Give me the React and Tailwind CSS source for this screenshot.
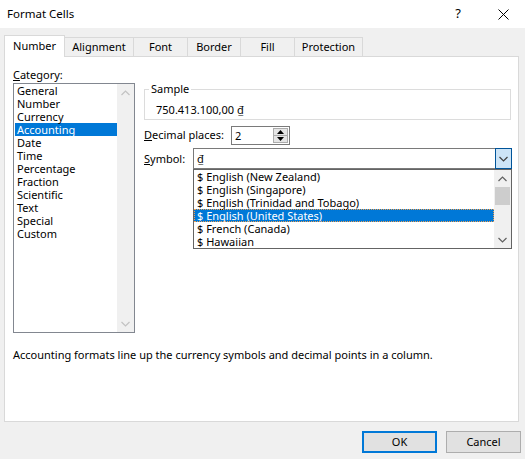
import { useState } from "react"

const categories = [
  "General", "Number", "Currency", "Accounting", "Date", "Time",
  "Percentage", "Fraction", "Scientific", "Text", "Special", "Custom",
]

const symbols = [
  "$ English (New Zealand)",
  "$ English (Singapore)",
  "$ English (Trinidad and Tobago)",
  "$ English (United States)",
  "$ French (Canada)",
  "$ Hawaiian",
]

const tabs = [
  { name: "Number", w: "w-[61px]" },
  { name: "Alignment", w: "w-[70px]" },
  { name: "Font", w: "w-[55px]" },
  { name: "Border", w: "w-[54px]" },
  { name: "Fill", w: "w-[55px]" },
  { name: "Protection", w: "w-[69px]" },
]

function Chevron({ up, color }) {
  return (
    <svg width="9" height="6" viewBox="0 0 9 6">
      <path
        d={up ? "M0.5 5L4.5 1L8.5 5" : "M0.5 1L4.5 5L8.5 1"}
        fill="none"
        stroke={color}
        strokeWidth="1.2"
      />
    </svg>
  )
}

function Triangle({ up }) {
  return (
    <svg width="7" height="4" viewBox="0 0 7 4">
      <path d={up ? "M0 4L3.5 0L7 4Z" : "M0 0L3.5 4L7 0Z"} fill="#000" />
    </svg>
  )
}

export default function App() {
  const [category, setCategory] = useState(3)
  const [symbol, setSymbol] = useState(3)

  return (
    <div className="w-[525px] h-[459px] overflow-hidden bg-[#f0f0f0] text-[11px] text-black font-['Segoe_UI','Noto_Sans',sans-serif]">
      {/* Title bar */}
      <div className="h-[28px] bg-white flex items-center">
        <span className="pl-[7px] text-[11.5px]">Format Cells</span>
        <div className="ml-auto flex h-full">
          <div className="w-[46px] flex items-center justify-center text-[13px]">?</div>
          <div className="w-[44px] flex items-center justify-center">
            <svg width="11" height="11" viewBox="0 0 11 11">
              <path d="M0.5 0.5L10.5 10.5M10.5 0.5L0.5 10.5" stroke="#000" strokeWidth="1" />
            </svg>
          </div>
        </div>
      </div>

      {/* Tabs */}
      <div className="h-[21px] mt-[7px] pl-[4px] flex items-end relative z-10">
        {tabs.map((t, i) =>
          i === 0 ? (
            <div
              key={t.name}
              className={`${t.w} h-[22px] -mb-px bg-white border-t border-l border-r border-[#d9d9d9] flex items-center justify-center`}
            >
              {t.name}
            </div>
          ) : (
            <div
              key={t.name}
              className={`${t.w} h-[19px] -ml-px bg-[#f0f0f0] border-t border-l border-r border-[#d9d9d9] flex items-center justify-center pt-[1px]`}
            >
              {t.name}
            </div>
          )
        )}
      </div>

      {/* Panel */}
      <div className="ml-[4px] w-[515px] h-[366px] bg-white border border-[#d9d9d9] pt-[9px] pl-[8px]">
        <div className="flex">
          {/* Category */}
          <div className="w-[122px]">
            <div className="h-[17px] leading-[17px]">
              <u>C</u>ategory:
            </div>
            <div className="h-[250px] border border-[#828790] bg-white flex">
              <div className="flex-1 pl-px">
                {categories.map((c, i) => (
                  <div
                    key={c}
                    onClick={() => setCategory(i)}
                    className={`h-[13px] leading-[13px] pl-[2px] ${
                      i === category ? "bg-[#0078d7] text-white" : ""
                    }`}
                  >
                    {c}
                  </div>
                ))}
              </div>
              <div className="w-[17px] bg-[#f0f0f0] flex flex-col justify-between">
                <div className="h-[17px] flex items-center justify-center">
                  <Chevron up color="#c2c2c2" />
                </div>
                <div className="h-[17px] flex items-center justify-center">
                  <Chevron color="#c2c2c2" />
                </div>
              </div>
            </div>
          </div>

          {/* Right side */}
          <div className="ml-[9px]">
            <fieldset className="w-[367px] mt-[15px] border border-[#dcdcdc]">
              <legend className="ml-[4px] px-[2px] leading-[16px]">Sample</legend>
              <div className="pt-[5px] pb-[1px] pl-[11px] leading-[16px]">750.413.100,00 ₫</div>
            </fieldset>

            <div className="mt-[6px] flex items-center">
              <div className="w-[87px] whitespace-nowrap">
                <u>D</u>ecimal places:
              </div>
              <div className="w-[59px] h-[19px] border border-[#7a7a7a] bg-white flex">
                <div className="flex-1 pl-[3px] leading-[17px]">2</div>
                <div className="w-[15px] my-px mr-px flex flex-col">
                  <div className="flex-1 border border-[#acacac] bg-[#e5e5e5] flex items-center justify-center">
                    <Triangle up />
                  </div>
                  <div className="flex-1 -mt-px border border-[#acacac] bg-[#e5e5e5] flex items-center justify-center">
                    <Triangle />
                  </div>
                </div>
              </div>
            </div>

            <div className="mt-[3px] flex">
              <div className="w-[49px] h-[21px] leading-[21px]">
                <u>S</u>ymbol:
              </div>
              <div className="w-[319px]">
                <div className="h-[21px] border border-[#7a7a7a] bg-white flex">
                  <div className="flex-1 pl-[3px] leading-[19px]">₫</div>
                  <div className="w-[17px] -my-px -mr-px border border-[#005499] bg-[#cce4f7] flex items-center justify-center">
                    <Chevron color="#404040" />
                  </div>
                </div>
                <div className="h-[80px] border border-[#646464] bg-white flex">
                  <div className="flex-1">
                    {symbols.map((s, i) => (
                      <div
                        key={s}
                        onClick={() => setSymbol(i)}
                        className={`h-[13px] leading-[13px] pl-[3px] ${
                          i === symbol
                            ? "bg-[#0078d7] text-white outline-1 outline-dotted outline-[#f0a050] -outline-offset-1"
                            : ""
                        }`}
                      >
                        {s}
                      </div>
                    ))}
                  </div>
                  <div className="w-[17px] bg-[#f0f0f0] flex flex-col">
                    <div className="h-[17px] flex items-center justify-center">
                      <Chevron up color="#606060" />
                    </div>
                    <div className="h-[18px] mx-px bg-[#cdcdcd]" />
                    <div className="mt-auto h-[17px] flex items-center justify-center">
                      <Chevron color="#606060" />
                    </div>
                  </div>
                </div>
              </div>
            </div>
          </div>
        </div>

        <p className="mt-[14px] leading-[16px]">
          Accounting formats line up the currency symbols and decimal points in a column.
        </p>
      </div>

      {/* Buttons */}
      <div className="mt-[9px] pr-[4px] flex justify-end gap-[9px]">
        <button className="w-[75px] h-[22px] border-2 border-[#0078d7] bg-[#e1e1e1]">OK</button>
        <button className="w-[75px] h-[22px] border border-[#adadad] bg-[#e1e1e1]">Cancel</button>
      </div>
    </div>
  )
}
